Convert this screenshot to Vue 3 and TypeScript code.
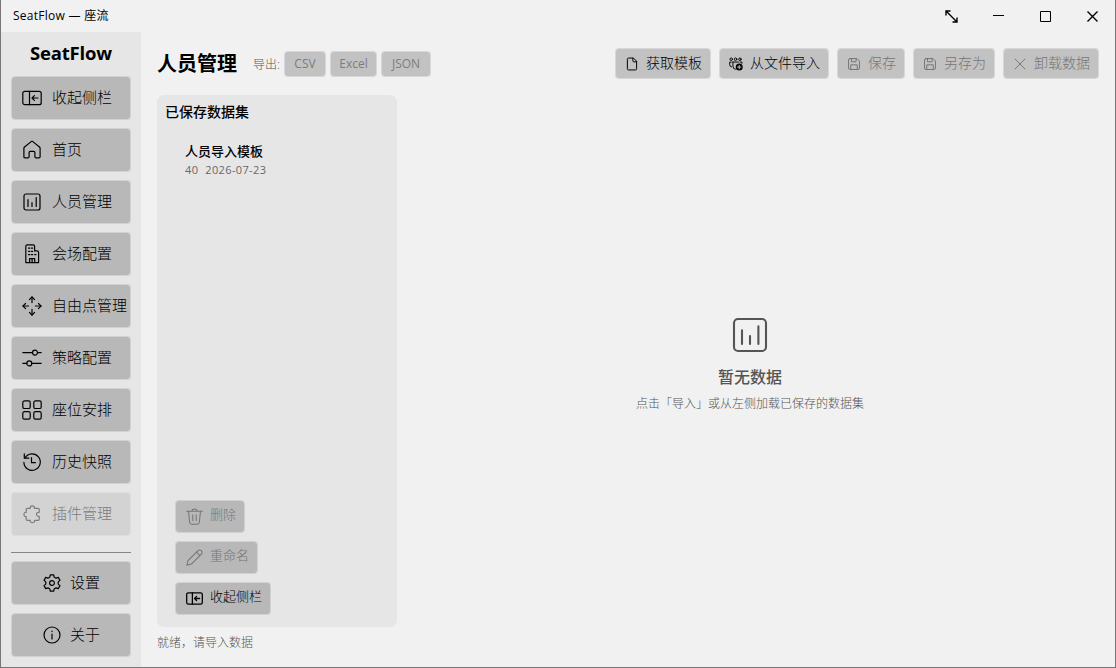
<script setup lang="ts">
import { h, type FunctionalComponent } from 'vue'

type IconName =
  | 'panel' | 'home' | 'chart' | 'building' | 'move' | 'sliders' | 'grid' | 'history'
  | 'puzzle' | 'gear' | 'info' | 'file' | 'people' | 'save' | 'close' | 'trash' | 'pencil'

interface NavItem {
  label: string
  icon: IconName
  disabled?: boolean
}

interface Dataset {
  name: string
  count: number
  date: string
}

const gearPath = (() => {
  const points: string[] = []
  for (let i = 0; i < 6; i++) {
    const base = i * 60 - 90
    for (const [offset, r] of [[-20, 6.3], [-12, 8.4], [12, 8.4], [20, 6.3]]) {
      const a = ((base + offset) * Math.PI) / 180
      points.push(`${(10 + r * Math.cos(a)).toFixed(2)} ${(10 + r * Math.sin(a)).toFixed(2)}`)
    }
  }
  return 'M' + points.join('L') + 'Z'
})()

const icons: Record<IconName, string[]> = {
  panel: ['M2.8 3.3H17.2a2 2 0 0 1 2 2V14.7a2 2 0 0 1-2 2H2.8a2 2 0 0 1-2-2V5.3a2 2 0 0 1 2-2Z', 'M7.5 3.3V16.7', 'M16 10H10M12.4 7.6L10 10l2.4 2.4'],
  home: ['M1.9 8.3Q1.9 7.6 2.5 7L9.2 1.6Q10 1 10.8 1.6L17.5 7Q18.1 7.6 18.1 8.3V16.7Q18.1 17.8 17 17.8H14Q12.9 17.8 12.9 16.7V12.5Q12.9 11.4 11.8 11.4H8.2Q7.1 11.4 7.1 12.5V16.7Q7.1 17.8 6 17.8H3Q1.9 17.8 1.9 16.7Z'],
  chart: ['M4 2H16a2 2 0 0 1 2 2V16a2 2 0 0 1-2 2H4a2 2 0 0 1-2-2V4a2 2 0 0 1 2-2Z', 'M6 7.6V14.5M10 10.5V14.5M14.2 5.6V14.5'],
  building: ['M3.8 18.6V2.4Q3.8.9 5.3.9H11.2Q12.6.9 12.6 2.4V6.9H15Q16.6 6.9 16.6 8.4V18.6Z', 'M7.6 18.4V14.6H12.7V18.4M10.1 14.6V18.4', 'M6.5 4.1h1.3M9.4 4.1h1.3M6.5 7.3h1.3M9.4 7.3h1.3M6.5 10.6h1.3M9.4 10.6h1.3M12.7 10.6h1.3'],
  move: ['M10 1V6.6M10 13.4V19M1 10H6.6M13.4 10H19', 'M7.4 3.6L10 1l2.6 2.6M7.4 16.4L10 19l2.6-2.6M3.6 7.4L1 10l2.6 2.6M16.4 7.4L19 10l-2.6 2.6'],
  sliders: ['M.8 4.6H10.5M15.5 4.6H19.2M.8 15.4H4.8M9.8 15.4H19.2', 'M15.5 4.6a2.5 2.5 0 1 1-5 0a2.5 2.5 0 1 1 5 0Z', 'M9.8 15.4a2.5 2.5 0 1 1-5 0a2.5 2.5 0 1 1 5 0Z'],
  grid: ['M2.4.9H6.6a1.6 1.6 0 0 1 1.6 1.6V6.9a1.6 1.6 0 0 1-1.6 1.6H2.4A1.6 1.6 0 0 1 .8 6.9V2.5A1.6 1.6 0 0 1 2.4.9Z', 'M13.4.9h4.2a1.6 1.6 0 0 1 1.6 1.6V6.9a1.6 1.6 0 0 1-1.6 1.6h-4.2a1.6 1.6 0 0 1-1.6-1.6V2.5A1.6 1.6 0 0 1 13.4.9Z', 'M2.4 11.7H6.6a1.6 1.6 0 0 1 1.6 1.6v4.2a1.6 1.6 0 0 1-1.6 1.6H2.4A1.6 1.6 0 0 1 .8 17.5V13.3a1.6 1.6 0 0 1 1.6-1.6Z', 'M13.4 11.7h4.2a1.6 1.6 0 0 1 1.6 1.6v4.2a1.6 1.6 0 0 1-1.6 1.6h-4.2a1.6 1.6 0 0 1-1.6-1.6V13.3a1.6 1.6 0 0 1 1.6-1.6Z'],
  history: ['M3.1 5.8A8.2 8.2 0 1 1 1.9 10.4', 'M2.3 1.9V6.2H6.8', 'M9.5 5.6V10.7H13.4'],
  puzzle: ['M5.3 4.4H8.2C7.6 1 13 1 12.4 4.4H16.1Q17.2 4.4 17.2 5.5V8.3C13.6 7.8 13.6 12.9 17.2 12.3V15.3Q17.2 16.4 16.1 16.4H12.6C13.1 19.5 7.7 19.5 8.2 16.4H5.3Q4.2 16.4 4.2 15.3V12.6C1.2 13.1 1.2 7.8 4.2 8.3V5.5Q4.2 4.4 5.3 4.4Z'],
  gear: [gearPath, 'M12.4 10a2.4 2.4 0 1 1-4.8 0a2.4 2.4 0 1 1 4.8 0Z'],
  info: ['M18 10a8 8 0 1 1-16 0a8 8 0 1 1 16 0Z', 'M10 9V14M10 6.1V6.6'],
  file: ['M11.5 1.5H5.2Q3.4 1.5 3.4 3.2V16.8Q3.4 18.5 5.2 18.5H14.8Q16.6 18.5 16.6 16.8V6.6Z', 'M11.2 1.8V5.4Q11.2 6.9 12.7 6.9H16.4'],
  people: ['M5 3.2a1.8 1.8 0 1 1-3.6 0a1.8 1.8 0 1 1 3.6 0ZM11.2 3.2a1.8 1.8 0 1 1-3.6 0a1.8 1.8 0 1 1 3.6 0ZM17.4 3.2a1.8 1.8 0 1 1-3.6 0a1.8 1.8 0 1 1 3.6 0Z', 'M3.3 7.2H1V11Q1 14 3.6 14.2M5.6 7.2H13.4M15.6 7.2H18.5V9M5.6 7.2V13Q5.8 17.4 9.2 17.6'],
  save: ['M4.2 2.2H14.2L17.8 5.8V15.8Q17.8 17.8 15.8 17.8H4.2Q2.2 17.8 2.2 15.8V4.2Q2.2 2.2 4.2 2.2Z', 'M6.4 2.2V6.8H13V2.2M5.4 17.8V11.2H14.6V17.8'],
  close: ['M3 3L17 17M17 3L3 17'],
  trash: ['M.8 3.8H19.2M7 3.6C7 .2 13 .2 13 3.6', 'M3 3.9L4.3 17Q4.5 19 6.5 19H13.5Q15.5 19 15.7 17L17 3.9', 'M8 8V14.8M12 8V14.8'],
  pencil: ['M1 19L2.3 13.7L14.1 1.9Q16 .3 18 2Q19.7 4 18.1 5.9L6.3 17.7Z', 'M12.3 3.7L16.3 7.7'],
}

// The import icon carries a filled badge with a plus in its lower right corner.
const Icon: FunctionalComponent<{ name: IconName; size?: number; weight?: number }> = (props) => {
  const size = props.size ?? 20
  return h(
    'svg',
    {
      width: size,
      height: size,
      viewBox: '0 0 20 20',
      fill: 'none',
      stroke: 'currentColor',
      'stroke-width': props.weight ?? 1.2,
      'stroke-linecap': 'round',
      'stroke-linejoin': 'round',
    },
    [
      ...icons[props.name].map((d) => h('path', { d })),
      ...(props.name === 'people'
        ? [
            h('circle', { cx: 14.6, cy: 14.4, r: 5, fill: 'currentColor', stroke: 'none' }),
            h('path', { d: 'M14.6 12V16.8M12.2 14.4H17', stroke: '#c2c2c2' }),
          ]
        : []),
    ],
  )
}
Icon.props = ['name', 'size', 'weight']

const navItems: NavItem[] = [
  { label: '收起侧栏', icon: 'panel' },
  { label: '首页', icon: 'home' },
  { label: '人员管理', icon: 'chart' },
  { label: '会场配置', icon: 'building' },
  { label: '自由点管理', icon: 'move' },
  { label: '策略配置', icon: 'sliders' },
  { label: '座位安排', icon: 'grid' },
  { label: '历史快照', icon: 'history' },
  { label: '插件管理', icon: 'puzzle', disabled: true },
]

const footerItems: NavItem[] = [
  { label: '设置', icon: 'gear' },
  { label: '关于', icon: 'info' },
]

const exportFormats = ['CSV', 'Excel', 'JSON']

const toolbar: NavItem[] = [
  { label: '获取模板', icon: 'file' },
  { label: '从文件导入', icon: 'people' },
  { label: '保存', icon: 'save', disabled: true },
  { label: '另存为', icon: 'save', disabled: true },
  { label: '卸载数据', icon: 'close', disabled: true },
]

const datasets: Dataset[] = [{ name: '人员导入模板', count: 40, date: '2026-07-23' }]

const datasetActions: NavItem[] = [
  { label: '删除', icon: 'trash', disabled: true },
  { label: '重命名', icon: 'pencil', disabled: true },
  { label: '收起侧栏', icon: 'panel' },
]

const windowControls: string[] = [
  'M3.5 3.5L13.5 13.5M3 7.5V3H7.5M14 9.5V14H9.5',
  'M3 7.5H14',
  'M3.5 3.5H13.5V13.5H3.5Z',
  'M3.5 3.5L13.5 13.5M13.5 3.5L3.5 13.5',
]
</script>

<template>
  <div class="window">
    <header class="titlebar">
      <span class="caption">SeatFlow — 座流</span>
      <div class="controls">
        <button v-for="(d, i) in windowControls" :key="i" class="control">
          <svg width="17" height="17" viewBox="0 0 17 17" fill="none" stroke="#000" :stroke-width="i === 0 || i === 3 ? 1.4 : 1"><path :d="d" /></svg>
        </button>
      </div>
    </header>

    <div class="body">
      <aside class="sidebar">
        <div class="brand">SeatFlow</div>
        <nav class="nav">
          <button v-for="item in navItems" :key="item.label" class="btn nav-btn" :class="{ off: item.disabled }">
            <Icon :name="item.icon" />
            <span>{{ item.label }}</span>
          </button>
        </nav>
        <div class="rule"></div>
        <div class="nav">
          <button v-for="item in footerItems" :key="item.label" class="btn nav-btn centered">
            <Icon :name="item.icon" />
            <span>{{ item.label }}</span>
          </button>
        </div>
      </aside>

      <main class="main">
        <div class="head">
          <h1>人员管理</h1>
          <span class="export-label">导出:</span>
          <div class="exports">
            <button v-for="f in exportFormats" :key="f" class="btn export-btn" :class="f.toLowerCase()">{{ f }}</button>
          </div>
          <div class="toolbar">
            <button v-for="t in toolbar" :key="t.label" class="btn tool-btn" :class="{ dim: t.disabled }">
              <Icon :name="t.icon" :size="14" :weight="1.4" />
              <span>{{ t.label }}</span>
            </button>
          </div>
        </div>

        <div class="content">
          <section class="datasets">
            <h2>已保存数据集</h2>
            <div v-for="d in datasets" :key="d.name" class="dataset">
              <div class="dataset-name">{{ d.name }}</div>
              <div class="dataset-meta"><span>{{ d.count }}</span><span>{{ d.date }}</span></div>
            </div>
            <div class="actions">
              <button v-for="a in datasetActions" :key="a.label" class="btn action-btn" :class="{ dim: a.disabled }">
                <Icon :name="a.icon" :size="17" :weight="a.icon === 'panel' ? 1.5 : 1.2" />
                <span>{{ a.label }}</span>
              </button>
            </div>
          </section>
          <section class="empty">
            <Icon name="chart" :size="40" :weight="1.05" />
            <div class="empty-title">暂无数据</div>
            <div class="empty-hint">点击「导入」或从左侧加载已保存的数据集</div>
          </section>
        </div>
        <footer class="status">就绪，请导入数据</footer>
      </main>
    </div>
  </div>
</template>

<style>
body {
  margin: 0;
  overflow: hidden;
}
</style>

<style scoped>
.window {
  box-sizing: border-box;
  width: 1116px;
  height: 668px;
  display: flex;
  flex-direction: column;
  border: solid #777;
  border-width: 0 1px 1px;
  background: #f1f1f1;
  color: #000;
  font-family: "Open Sans", "Noto Sans CJK SC", sans-serif;
  font-weight: 300;
  white-space: nowrap;
}
.titlebar {
  height: 32px;
  flex: none;
  display: flex;
  align-items: center;
  justify-content: space-between;
  padding-left: 12px;
}
.caption {
  font-size: 12px;
  font-weight: 400;
  line-height: 32px;
  letter-spacing: 0.27px;
}
.controls {
  display: flex;
  margin-right: -1px;
}
.control {
  width: 47px;
  height: 33px;
  padding: 0;
  border: 0;
  background: none;
  display: flex;
  align-items: center;
  justify-content: center;
}
.body {
  flex: 1;
  min-height: 0;
  display: flex;
}
.sidebar {
  box-sizing: border-box;
  width: 140px;
  flex: none;
  padding: 0 10px;
  background: #e6e6e6;
}
.brand {
  height: 44px;
  line-height: 42px;
  text-align: center;
  font-size: 18.5px;
  font-weight: 700;
  letter-spacing: -0.2px;
}
.nav {
  display: flex;
  flex-direction: column;
  gap: 8px;
}
.btn {
  box-sizing: border-box;
  display: flex;
  align-items: center;
  margin: 0;
  padding: 0;
  border: 1px solid rgba(184, 184, 184, 0.45);
  border-radius: 4px;
  background: #b8b8b8;
  background-clip: padding-box;
  color: #000;
  font-family: inherit;
  font-weight: 300;
}
.nav-btn {
  width: 120px;
  height: 44px;
  padding-left: 10px;
  gap: 10px;
  font-size: 15px;
  line-height: 20px;
}
.nav-btn svg {
  flex: none;
}
.nav-btn span,
.tool-btn span {
  padding-bottom: 2px;
}
.nav-btn.off {
  background-color: #d3d3d3;
  border-color: rgba(211, 211, 211, 0.5);
  color: #7c7c7c;
}
.nav-btn.centered {
  justify-content: center;
  padding: 0;
  gap: 8px;
}
.rule {
  height: 1px;
  margin: 16px 0 8px;
  background: #858585;
}
.main {
  flex: 1;
  min-width: 0;
  display: flex;
  flex-direction: column;
  padding: 16px 16px 0;
}
.head {
  height: 31px;
  display: flex;
  align-items: center;
}
h1 {
  margin: 0;
  font-size: 20px;
  line-height: 30px;
  font-weight: 700;
}
.export-label {
  width: 31px;
  margin-left: 16px;
  font-size: 12px;
  color: #555;
}
.exports {
  display: flex;
  gap: 4px;
}
.export-btn {
  height: 26px;
  justify-content: center;
  background-color: #c2c2c2;
  color: #7c7c7c;
  font-size: 12px;
  font-weight: 400;
}
.csv {
  width: 42px;
}
.excel {
  width: 47px;
}
.json {
  width: 50px;
}
.toolbar {
  margin-left: auto;
  display: flex;
  gap: 8px;
}
.tool-btn {
  height: 31px;
  padding: 0 8px 0 9px;
  gap: 7px;
  background-color: #c2c2c2;
  font-size: 14px;
  line-height: 20px;
}
.dim {
  color: #757575;
}
.content {
  height: 532px;
  margin-top: 16px;
  display: flex;
}
.datasets {
  box-sizing: border-box;
  width: 240px;
  flex: none;
  display: flex;
  flex-direction: column;
  padding: 6px 8px 12px;
  border-radius: 7px;
  background: #e6e6e6;
}
h2 {
  margin: 0;
  font-size: 14px;
  line-height: 22px;
  font-weight: 500;
}
.dataset {
  padding: 18px 0 0 20px;
}
.dataset-name {
  font-size: 13px;
  line-height: 20px;
  font-weight: 500;
}
.dataset-meta {
  display: flex;
  gap: 7px;
  padding-top: 1px;
  font-size: 11px;
  line-height: 16px;
  font-weight: 400;
  letter-spacing: 0.36px;
  color: #666;
}
.actions {
  margin-top: auto;
  padding-left: 10px;
  display: flex;
  flex-direction: column;
  align-items: flex-start;
  gap: 8px;
}
.action-btn {
  height: 33px;
  padding: 0 8px 0 10px;
  gap: 7px;
  font-size: 13px;
  line-height: 18px;
}
.action-btn span {
  padding-bottom: 6px;
}
.empty {
  flex: 1;
  display: flex;
  flex-direction: column;
  align-items: center;
  padding: 220px 0 0 4px;
  color: #555;
}
.empty-title {
  margin-top: 11px;
  font-size: 16px;
  line-height: 22px;
  font-weight: 500;
}
.empty-hint {
  margin-top: 7px;
  font-size: 12px;
  line-height: 18px;
}
.status {
  margin-top: 7px;
  font-size: 12px;
  line-height: 18px;
  color: #555;
}
</style>
